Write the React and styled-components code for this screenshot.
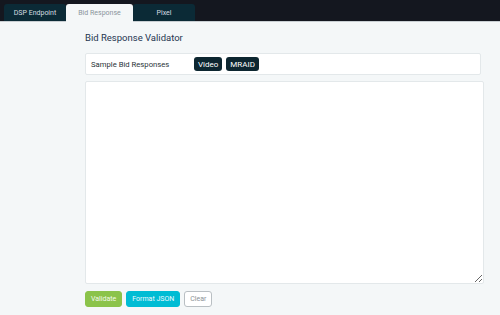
import styled, { createGlobalStyle } from 'styled-components';

const GlobalStyle = createGlobalStyle`
  html, body {
    margin: 0;
    padding: 0;
    background: #f4f7f8;
    font-family: Roboto, "Liberation Sans", sans-serif;
  }
`;

const Page = styled.div`
  width: 500px;
  height: 315px;
  display: flex;
  flex-direction: column;
  background: #f4f7f8;
  overflow: hidden;
`;

const TopBar = styled.div`
  height: 22px;
  background: #14171f;
  border-bottom: 1px solid #c9cfd3;
  display: flex;
  align-items: flex-end;
  padding-left: 4px;
  box-sizing: border-box;
`;

const Tab = styled.div`
  width: ${(p) => p.$w}px;
  display: flex;
  align-items: center;
  justify-content: center;
  font-size: 7px;
  font-weight: 400;
  border-radius: 3px 3px 0 0;
  background: ${(p) => (p.$active ? '#f4f7f8' : '#0b2a36')};
  color: ${(p) => (p.$active ? '#8a959c' : '#d5dde0')};
  margin-bottom: ${(p) => (p.$active ? '-1px' : '0')};
  height: ${(p) => (p.$active ? '18px' : '17px')};
`;

const Content = styled.div`
  display: flex;
  flex-direction: column;
  padding: 9px 16px 0 85px;
`;

const Title = styled.h1`
  margin: 0 0 8px;
  font-size: 9.5px;
  font-weight: 400;
  color: #1f3550;
  line-height: 14px;
`;

const SampleBox = styled.div`
  width: 396px;
  height: 22px;
  box-sizing: border-box;
  background: #fff;
  border: 1px solid #e3e8ea;
  border-radius: 2px;
  display: flex;
  align-items: center;
  padding-left: 5px;
  font-size: 7.7px;
  color: #2a3338;
`;

const SampleLabel = styled.span`
  width: 103px;
`;

const Badge = styled.span`
  background: #0d2630;
  color: #fff;
  font-size: 8px;
  height: 14px;
  padding: 0 4px;
  border-radius: 3px;
  display: flex;
  align-items: center;
  margin-right: 4px;
`;

const Editor = styled.textarea`
  margin-top: 6px;
  width: 399px;
  height: 203px;
  box-sizing: border-box;
  background: #fff;
  border: 1px solid #e3e8ea;
  border-radius: 2px;
  outline: none;
  padding: 4px;
  font-family: "Liberation Mono", monospace;
  font-size: 8px;
`;

const Actions = styled.div`
  display: flex;
  gap: 4px;
  margin-top: 7px;
`;

const Button = styled.button`
  height: 16px;
  padding: 0 ${(p) => p.$pad || 5}px;
  border-radius: 3px;
  font-family: Roboto, "Liberation Sans", sans-serif;
  font-size: 7px;
  font-weight: 400;
  cursor: pointer;
  border: 1px solid ${(p) => p.$border};
  background: ${(p) => p.$bg};
  color: ${(p) => p.$color};
`;

export default function App() {
  return (
    <Page>
      <GlobalStyle />
      <TopBar>
        <Tab $w={62}>DSP Endpoint</Tab>
        <Tab $w={67} $active>Bid Response</Tab>
        <Tab $w={62}>Pixel</Tab>
      </TopBar>
      <Content>
        <Title>Bid Response Validator</Title>
        <SampleBox>
          <SampleLabel>Sample Bid Responses</SampleLabel>
          <Badge>Video</Badge>
          <Badge>MRAID</Badge>
        </SampleBox>
        <Editor spellCheck={false} />
        <Actions>
          <Button $bg="#8bc34a" $border="#8bc34a" $color="#f4faea">Validate</Button>
          <Button $bg="#00bcd4" $border="#00bcd4" $color="#eefaff">Format JSON</Button>
          <Button $bg="#fff" $border="#b9bfc3" $color="#8a9296" $pad={5}>Clear</Button>
        </Actions>
      </Content>
    </Page>
  );
}
